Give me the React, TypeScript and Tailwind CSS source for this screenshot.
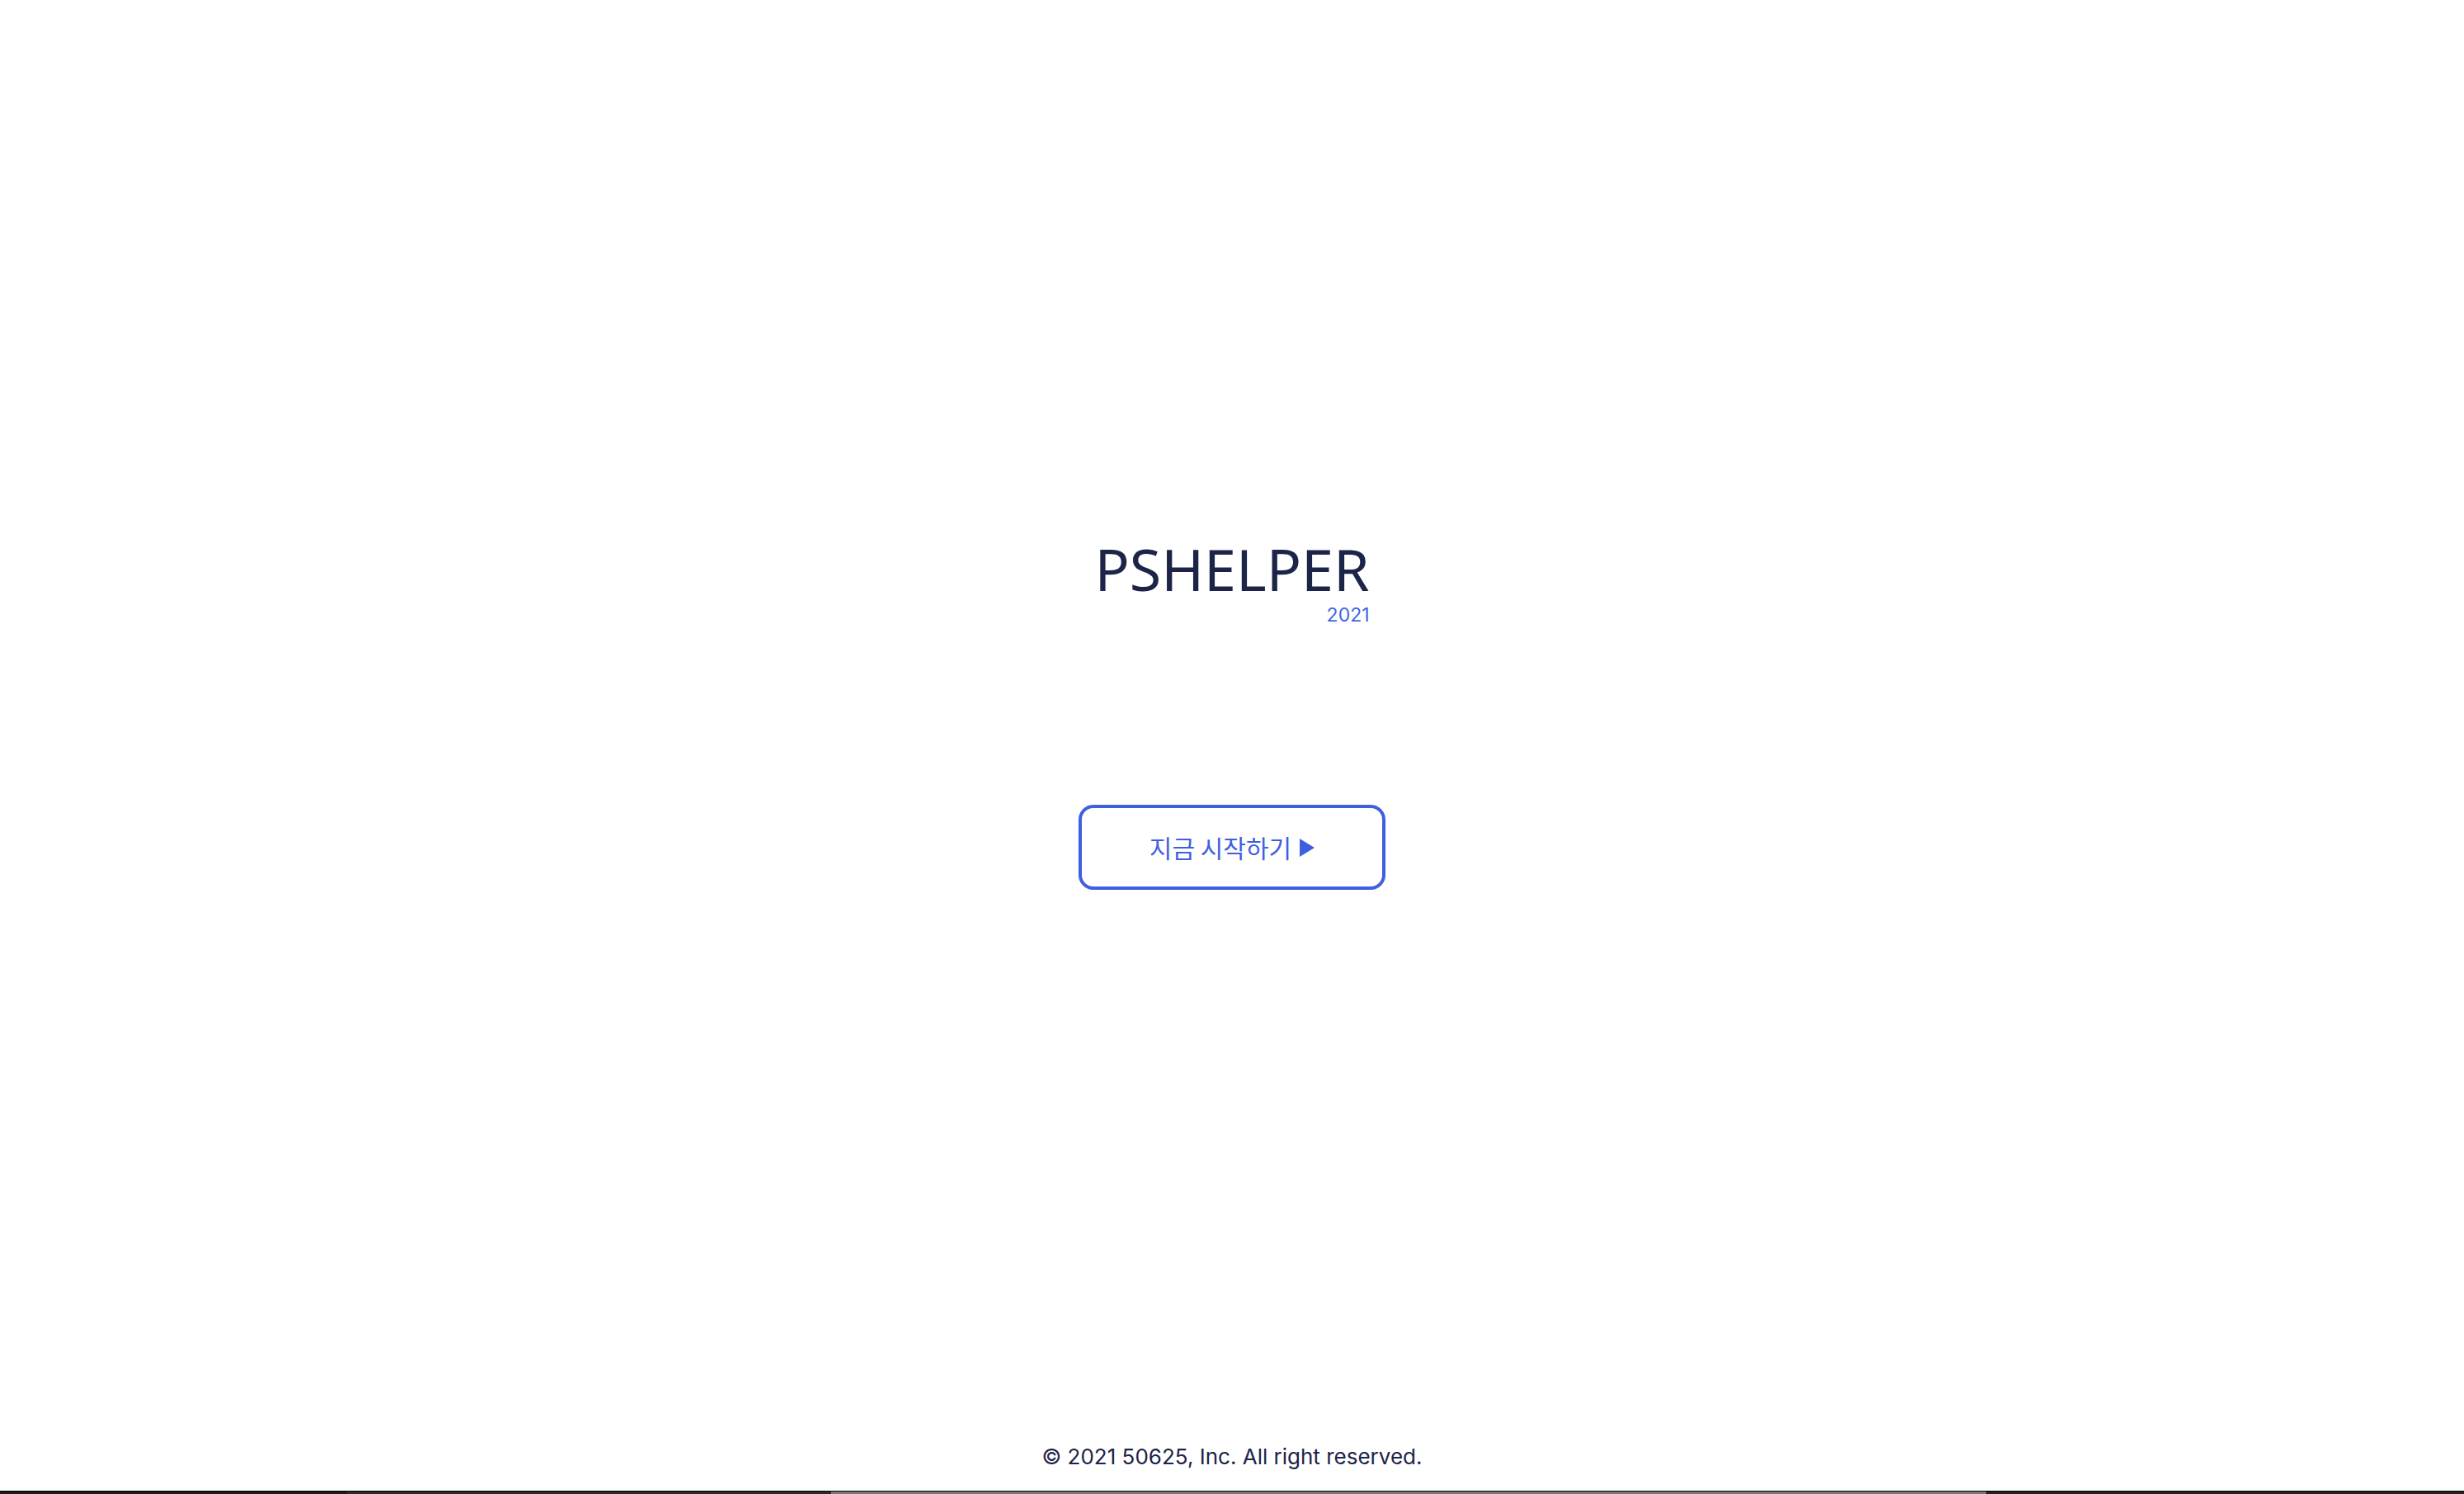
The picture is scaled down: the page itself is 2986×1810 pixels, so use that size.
export default function App() {
  return (
    <div className="relative flex h-[1810px] w-full flex-col items-center overflow-hidden bg-white font-['Inter','Noto_Sans_CJK_KR',sans-serif] text-[#1c2448]">
      {/* Logo */}
      <div className="mt-[654px] flex flex-col items-end">
        <h1 className="font-['Noto_Sans','Noto_Sans_CJK_KR',sans-serif] text-[70px] font-normal leading-[70px] text-[#1c2448]">
          PSHELPER
        </h1>
        <span className="mt-[10px] text-[23px] leading-[23px] text-[#4166e0]">2021</span>
      </div>

      {/* Start button */}
      <button className="mt-[218px] flex h-[103px] w-[372px] items-center justify-center gap-[10px] rounded-[18px] border-[4px] border-[#3f5fdf] bg-white pb-[2px] text-[#3f5fdf]">
        <span className="font-['Noto_Sans_CJK_KR',sans-serif] text-[30px] leading-none">지금 시작하기</span>
        <svg width="18" height="22" viewBox="0 0 18 22" className="mt-[2px]">
          <polygon points="0,0 18,11 0,22" fill="#3f5fdf" />
        </svg>
      </button>

      <div className="flex-1" />

      {/* Footer */}
      <footer className="mb-[28px] text-[26px] leading-none text-[#1c2448]">
        © 2021 50625, Inc. All right reserved.
      </footer>

      {/* Bottom strip */}
      <div className="flex h-[4px] w-full border-t border-black">
        <div className="w-[420px] bg-[#1b1b1b]" />
        <div className="w-[587px] bg-[#2a2a2a]" />
        <div className="w-[1400px] bg-[#777777]" />
        <div className="flex-1 bg-[#222222]" />
      </div>
    </div>
  );
}
